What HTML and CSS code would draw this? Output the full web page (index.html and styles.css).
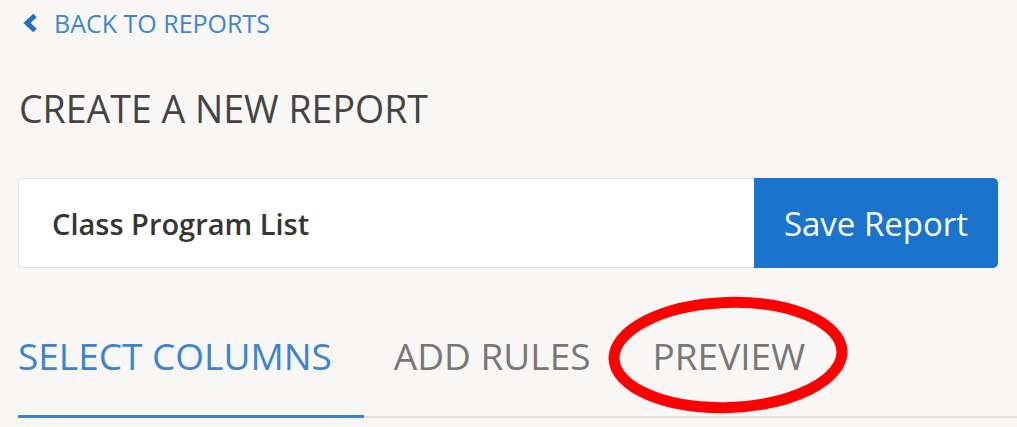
FILE: index.html
```html
<!DOCTYPE html>
<html>
<head>
  <title>Create a new report</title>
  <link rel="stylesheet" href="styles.css">
</head>
<body>
  <div class="page">
    <a class="back-link" href="#">
      <svg class="back-icon" width="16" height="20" viewBox="0 0 16 20">
        <path d="M13 2.5 L5 10 L13 17.5" fill="none" stroke="#1f6fc8" stroke-width="5"/>
      </svg>
      BACK TO REPORTS
    </a>

    <h1 class="title">CREATE A NEW REPORT</h1>

    <div class="name-row">
      <div class="name-input">Class Program List</div>
      <button class="save-btn">Save Report</button>
    </div>

    <div class="tabs">
      <div class="tab active">SELECT COLUMNS</div>
      <div class="tab">ADD RULES</div>
      <div class="tab tab-marked">
        PREVIEW
        <svg class="mark" width="250" height="126" viewBox="0 0 250 126">
          <ellipse cx="125" cy="60" rx="114" ry="52.5" fill="none" stroke="#ff0000" stroke-width="11" transform="rotate(-2 125 60)"/>
        </svg>
      </div>
    </div>
  </div>
</body>
</html>
```

FILE: styles.css
```css
body {
  margin: 0;
  font-family: "Open Sans", Arial, sans-serif;
  background-color: #f8f7f5;
  overflow: hidden;
}

.page {
  padding: 4px 19px 0 18px;
}

.back-link {
  display: flex;
  align-items: center;
  gap: 16px;
  height: 38px;
  padding-left: 4px;
  color: #3d85d6;
  font-size: 25px;
  text-decoration: none;
}

.title {
  margin: 42px 0 0 1px;
  font-size: 37.5px;
  font-weight: normal;
  color: #444;
  line-height: 50px;
}

.name-row {
  display: flex;
  margin-top: 44px;
  height: 90px;
}

.name-input {
  flex: 1;
  display: flex;
  align-items: center;
  padding-left: 33px;
  background-color: #fff;
  border: 1px solid #e3e3e3;
  border-right: none;
  border-radius: 4px 0 0 4px;
  font-size: 29px;
  font-weight: 600;
  color: #353535;
}

.save-btn {
  width: 244px;
  border: none;
  border-radius: 0 5px 5px 0;
  background-color: #1a74cd;
  color: #fff;
  font-family: "Open Sans", Arial, sans-serif;
  font-size: 33px;
  cursor: pointer;
}

.tabs {
  display: flex;
  margin: 28px -19px 0 0;
  border-bottom: 2px solid #e4e3e1;
}

.tab {
  position: relative;
  padding: 0 32px 0 0;
  height: 119px;
  line-height: 119px;
  font-size: 37px;
  color: #777;
}

.tab + .tab {
  padding-left: 30px;
}

.tab.active {
  color: #3a83d6;
  border-bottom: 3px solid #3a83d6;
  margin-bottom: -2px;
}

.mark {
  position: absolute;
  left: -20px;
  top: -1px;
}
```
